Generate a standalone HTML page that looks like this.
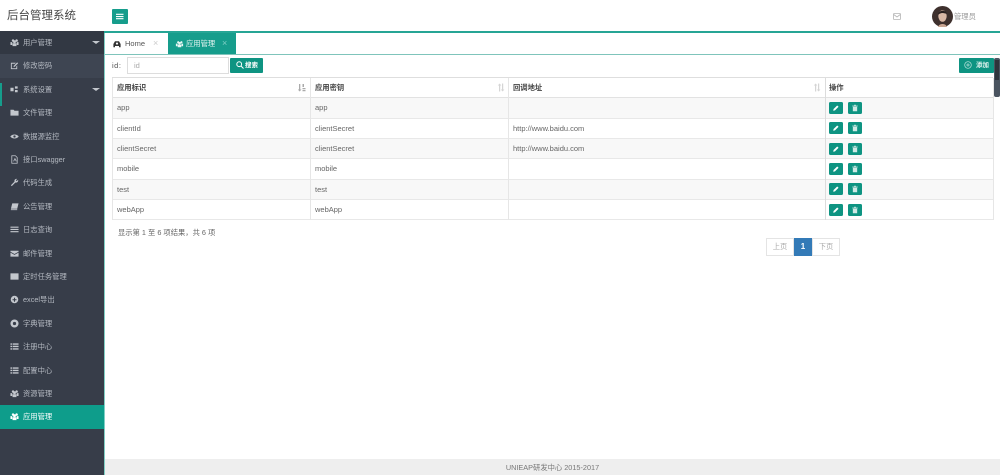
<!DOCTYPE html>
<html lang="zh">
<head>
<meta charset="utf-8">
<title>后台管理系统</title>
<style>
html,body{margin:0;padding:0;width:1000px;height:475px;overflow:hidden;background:#fff;}
body{font-family:"Liberation Sans","Noto Sans CJK SC",sans-serif;color:#555;font-size:7.300px;}
#w{position:relative;width:1000px;height:475px;overflow:hidden;background:#fff;filter:blur(.3px);}
.a{position:absolute;white-space:nowrap;}
#side{position:absolute;left:0;top:31px;width:104px;height:444px;background:#373d49;}
.m{position:absolute;left:0;width:104px;height:23.400px;line-height:23px;color:#b4b9c1;font-size:7.300px;}
.m span{position:absolute;left:23px;top:0;white-space:nowrap;}
.m svg{position:absolute;left:10px;top:7px;width:9px;height:9px;fill:#c3c7cd;}
.caret{position:absolute;left:92px;top:10px;width:0;height:0;border-left:4px solid transparent;border-right:4px solid transparent;border-top:3.500px solid #c3c7cd;}
.row{position:absolute;left:113px;width:880px;height:20px;border-bottom:1px solid #e8e8e8;box-sizing:border-box;font-size:7.500px;line-height:19px;color:#666;}
.row.o{background:#f8f8f8;}
.row i{position:absolute;font-style:normal;top:0;white-space:nowrap;}
.vl{position:absolute;top:78px;height:142px;width:1px;background:#e6e6e6;}
.b{position:absolute;width:14px;height:12px;border-radius:1.500px;background:#0e9482;}
.b svg{position:absolute;left:3px;top:2px;width:8px;height:8px;fill:#fff;}
.b.d svg{fill:#cfe9e5;}
.h{position:absolute;top:78px;font-size:7.300px;font-weight:bold;color:#444;line-height:19px;white-space:nowrap;}
.s{position:absolute;top:83px;width:8px;height:9px;color:#ccc;}
</style>
</head>
<body>
<div id="w">
<svg width="0" height="0" style="position:absolute"><defs>
<symbol id="u" viewBox="0 0 10 10"><path d="M3 1.500a1.400 1.400 0 1 1 0 2.700 1.400 1.400 0 0 1 0-2.700zM7 1.500a1.400 1.400 0 1 1 0 2.700 1.400 1.400 0 0 1 0-2.700zM5 2.500a1.600 1.600 0 1 1 0 3.200 1.600 1.600 0 0 1 0-3.200zM0.500 4.600h2v3.200h-2zM7.500 4.600h2v3.200h-2zM2.800 5.800h4.400v3.200h-4.400z"/></symbol>
<symbol id="l" viewBox="0 0 10 10"><path d="M.5 1.500h1.800v1.500H.5zM3 1.500h6.500v1.500H3zM.5 4.200h1.800v1.500H.5zM3 4.200h6.500v1.500H3zM.5 7h1.800v1.500H.5zM3 7h6.500v1.500H3z"/></symbol>
<symbol id="b" viewBox="0 0 10 10"><path d="M.5 1.800h9v1.300h-9zM.5 4.300h9v1.300h-9zM.5 6.800h9v1.300h-9z"/></symbol>
<symbol id="c" viewBox="0 0 10 10"><path fill-rule="evenodd" d="M5 .5a4.500 4.500 0 1 1 0 9 4.500 4.500 0 0 1 0-9zM5 3.200a1.800 1.800 0 1 0 0 3.600 1.800 1.800 0 0 0 0-3.600z"/></symbol>
<symbol id="p" viewBox="0 0 10 10"><path d="M1.500 8.500l.5-2.200 4.500-4.500 1.700 1.700-4.500 4.500z"/></symbol>
<symbol id="t" viewBox="0 0 10 10"><path d="M1.500 2h7v1h-7zM4 1h2v1H4zM2.300 3.500h5.400v5.500H2.300z"/></symbol>
</defs></svg>

<!-- header -->
<div class="a" style="left:7px;top:8px;font-size:11.500px;line-height:17px;color:#444;">后台管理系统</div>
<div class="a" style="left:112px;top:9px;width:15.500px;height:15px;background:#169d8c;border-radius:1px;">
  <svg style="position:absolute;left:4px;top:4px" width="7.500" height="7" viewBox="0 0 8 7" fill="#fff"><path d="M0 .6h8v1.200H0zM0 2.900h8v1.200H0zM0 5.200h8v1.200H0z"/></svg>
</div>
<svg class="a" style="left:893px;top:13px" width="8" height="7" viewBox="0 0 8 7" fill="none" stroke="#b5b5b5" stroke-width=".8"><rect x=".5" y=".5" width="7" height="6" rx=".6"/><path d="M.7 1.500L4 4l3.300-2.500"/></svg>
<svg class="a" style="left:932px;top:6px" width="21" height="21" viewBox="0 0 21 21">
  <circle cx="10.500" cy="10.500" r="10.500" fill="#3e302d"/>
  <ellipse cx="10.500" cy="10" rx="4.200" ry="5.800" fill="#d9b8a5"/>
  <path d="M6 21c1-4 8-4 9 0z" fill="#c9a592"/>
  <path d="M6 9c0-5 8-6 9-1-3-1-6-2-9 1z" fill="#2a2120"/>
</svg>
<div class="a" style="left:954px;top:11px;font-size:7.300px;line-height:11px;color:#999;">管理员</div>
<div class="a" style="left:0;top:31px;width:1000px;height:2px;background:#26a595;"></div>

<!-- sidebar -->
<div id="side">
  <div style="position:absolute;left:0;top:0;width:104px;height:23px;background:#323843;"></div>
  <div style="position:absolute;left:0;top:23px;width:104px;height:24px;background:#3e4552;"></div>
  <div style="position:absolute;left:0;top:52px;width:2px;height:23px;background:#169d8c;"></div>
  <div class="m" style="top:0"><svg><use href="#u"/></svg><span>用户管理</span><div class="caret"></div></div>
  <div class="m" style="top:23.400px"><svg viewBox="0 0 10 10"><path d="M1 2h5.500l-1 1H2v5h5V6l1-1v4H1zM4 5.500l4-4 1 1-4 4H4z"/></svg><span>修改密码</span></div>
  <div class="m" style="top:46.800px"><svg viewBox="0 0 10 10"><path d="M.5 3h3.500v4H.5zM5.500 1.500h3v2.500h-3zM5.500 5.500h3V8h-3z"/></svg><span>系统设置</span><div class="caret"></div></div>
  <div class="m" style="top:70.200px"><svg viewBox="0 0 10 10"><path d="M.5 2h3.500l1 1h4.500v5.500H.5z"/></svg><span>文件管理</span></div>
  <div class="m" style="top:93.600px"><svg viewBox="0 0 10 10"><path fill-rule="evenodd" d="M.3 5C2.500 2 7.500 2 9.700 5 7.500 8 2.500 8 .3 5zM5 3.700a1.300 1.300 0 1 0 0 2.600 1.300 1.300 0 0 0 0-2.600z"/></svg><span>数据源监控</span></div>
  <div class="m" style="top:117px"><svg viewBox="0 0 10 10" style="fill:none;stroke:#c3c7cd;stroke-width:.9"><path d="M2 .8h4l2 2v6.400H2zM4 7l1.500-3L7 7"/></svg><span>接口swagger</span></div>
  <div class="m" style="top:140.400px"><svg viewBox="0 0 10 10"><path d="M1 8l4-4c-.5-2 1-3.500 3-3L6.500 2.500l1 1L9 2c.5 2-1 3.500-3 3L2 9z"/></svg><span>代码生成</span></div>
  <div class="m" style="top:163.800px"><svg viewBox="0 0 10 10"><path d="M2.500 1.500h7l-1.500 6H1zM1 8h7v1H1z"/></svg><span>公告管理</span></div>
  <div class="m" style="top:187.200px"><svg><use href="#b"/></svg><span>日志查询</span></div>
  <div class="m" style="top:210.600px"><svg viewBox="0 0 10 10"><path d="M.5 2h9v1L5 5.500.5 3zM.5 4l4.500 2.500L9.500 4v4.500h-9z"/></svg><span>邮件管理</span></div>
  <div class="m" style="top:234px"><svg viewBox="0 0 10 10"><path d="M.5 1.500h9v7h-9z"/></svg><span>定时任务管理</span></div>
  <div class="m" style="top:257.400px"><svg viewBox="0 0 10 10"><path fill-rule="evenodd" d="M5 .8a4.200 4.200 0 1 1 0 8.400A4.200 4.200 0 0 1 5 .8zM4.400 3v1.700H2.800v1.200h1.600v1.600h1.200V5.900h1.600V4.700H5.600V3z"/></svg><span>excel导出</span></div>
  <div class="m" style="top:280.800px"><svg><use href="#c"/></svg><span>字典管理</span></div>
  <div class="m" style="top:304.200px"><svg><use href="#l"/></svg><span>注册中心</span></div>
  <div class="m" style="top:327.600px"><svg><use href="#l"/></svg><span>配置中心</span></div>
  <div class="m" style="top:351px"><svg><use href="#u"/></svg><span>资源管理</span></div>
  <div class="m" style="top:374.400px;background:#0e9d8b;color:#fff;height:23.600px;"><svg style="fill:#fff"><use href="#u"/></svg><span>应用管理</span></div>
</div>

<!-- tabs -->
<div class="a" style="left:104px;top:33px;width:1px;height:442px;background:#7fcfc5;"></div>
<svg class="a" style="left:113px;top:40px;width:8px;height:8px" viewBox="0 0 10 10" fill="#333"><path d="M2.500 1.500h5L9.500 5v4h-2V7.500h-5V9h-2V5z"/><circle cx="5" cy="4.500" r="1.300" fill="#fff"/></svg>
<div class="a" style="left:125px;top:38px;font-size:7.500px;line-height:11px;color:#555;">Home</div>
<div class="a" style="left:153px;top:38px;font-size:9px;line-height:11px;color:#ccc;">×</div>
<div class="a" style="left:168px;top:33px;width:68px;height:21px;background:#169d8c;"></div>
<svg class="a" style="left:175px;top:40px;width:9px;height:8px" fill="#eaf6f4"><use href="#u"/></svg>
<div class="a" style="left:186px;top:38px;font-size:7.300px;line-height:11px;color:#e6f5f2;">应用管理</div>
<div class="a" style="left:222px;top:38px;font-size:9px;line-height:11px;color:#7fcfc5;">×</div>
<div class="a" style="left:105px;top:54px;width:895px;height:1px;background:#7fc4bb;"></div>

<!-- search -->
<div class="a" style="left:112px;top:60px;font-size:7.500px;line-height:11px;color:#555;letter-spacing:.5px;">id:</div>
<div class="a" style="left:127px;top:57px;width:100px;height:15px;border:1px solid #ddd;"></div>
<div class="a" style="left:134px;top:60px;font-size:7.500px;line-height:11px;color:#aaa;">id</div>
<div class="a" style="left:230px;top:58px;width:33px;height:15px;background:#0e9482;border-radius:1px;"></div>
<svg class="a" style="left:236px;top:61px" width="8" height="8" viewBox="0 0 8 8" fill="none" stroke="#fff" stroke-width="1"><circle cx="3.200" cy="3.200" r="2.400"/><path d="M5 5l2.500 2.500"/></svg>
<div class="a" style="left:245px;top:60px;font-size:6.500px;line-height:11px;color:#fff;font-weight:bold;">搜索</div>
<div class="a" style="left:959px;top:58px;width:34.500px;height:15px;background:#0e9482;border-radius:1px;"></div>
<svg class="a" style="left:964px;top:61px" width="8" height="8" viewBox="0 0 8 8" fill="none" stroke="#bfe3de" stroke-width=".7"><circle cx="4" cy="4" r="3.300"/><path d="M4 2.200v3.600M2.200 4h3.600"/></svg>
<div class="a" style="left:976px;top:60px;font-size:6.500px;line-height:11px;color:#e6f5f2;font-weight:bold;">添加</div>

<!-- scrollbar -->
<div class="a" style="left:994px;top:58px;width:6px;height:39px;background:#4a5460;border-radius:2px;"></div>
<div class="a" style="left:995px;top:60px;width:4px;height:20px;background:#2e343c;"></div>

<!-- table -->
<div class="a" style="left:112px;top:77px;width:881px;height:1px;background:#dedede;"></div>
<div class="a" style="left:112px;top:97px;width:881px;height:1.500px;background:#e2e2e2;"></div>
<div class="h" style="left:117px">应用标识</div>
<div class="h" style="left:315px">应用密钥</div>
<div class="h" style="left:513px">回调地址</div>
<div class="h" style="left:829px">操作</div>
<svg class="s" style="left:298px" viewBox="0 0 8 9" fill="#aaa"><path d="M1 1h1.300v5.500H3.500L1.650 8.500-.2 6.500H1zM4.500 1h1.500v3H4.500zM4.500 5h3v1.200h-3zM4.500 7h3v1.200h-3z"/></svg>
<svg class="s" style="left:497px" viewBox="0 0 8 9" fill="#d5d5d5"><path d="M2 8.500V2.500H.8L2.600.5l1.800 2H3.200v6zM5 .5h1.200v6h1.200L5.600 8.500 3.800 6.500H5z"/></svg>
<svg class="s" style="left:813px" viewBox="0 0 8 9" fill="#d5d5d5"><path d="M2 8.500V2.500H.8L2.600.5l1.800 2H3.200v6zM5 .5h1.200v6h1.200L5.600 8.500 3.800 6.500H5z"/></svg>

<div class="row o" style="top:98px;height:21px;"><i style="left:4px">app</i><i style="left:202px">app</i></div>
<div class="row" style="top:119px;"><i style="left:4px">clientId</i><i style="left:202px">clientSecret</i><i style="left:400px">http://www.baidu.com</i></div>
<div class="row o" style="top:139px;"><i style="left:4px">clientSecret</i><i style="left:202px">clientSecret</i><i style="left:400px">http://www.baidu.com</i></div>
<div class="row" style="top:159px;height:21px;"><i style="left:4px">mobile</i><i style="left:202px">mobile</i></div>
<div class="row o" style="top:180px;"><i style="left:4px">test</i><i style="left:202px">test</i></div>
<div class="row" style="top:200px;"><i style="left:4px">webApp</i><i style="left:202px">webApp</i></div>

<div class="vl" style="left:112px"></div>
<div class="vl" style="left:310px"></div>
<div class="vl" style="left:508px"></div>
<div class="vl" style="left:825px;background:#dcdcdc"></div>
<div class="vl" style="left:993px"></div>

<div class="b" style="left:829px;top:102px"><svg><use href="#p"/></svg></div><div class="b d" style="left:848px;top:102px"><svg><use href="#t"/></svg></div>
<div class="b" style="left:829px;top:122px"><svg><use href="#p"/></svg></div><div class="b d" style="left:848px;top:122px"><svg><use href="#t"/></svg></div>
<div class="b" style="left:829px;top:143px"><svg><use href="#p"/></svg></div><div class="b d" style="left:848px;top:143px"><svg><use href="#t"/></svg></div>
<div class="b" style="left:829px;top:163px"><svg><use href="#p"/></svg></div><div class="b d" style="left:848px;top:163px"><svg><use href="#t"/></svg></div>
<div class="b" style="left:829px;top:183px"><svg><use href="#p"/></svg></div><div class="b d" style="left:848px;top:183px"><svg><use href="#t"/></svg></div>
<div class="b" style="left:829px;top:204px"><svg><use href="#p"/></svg></div><div class="b d" style="left:848px;top:204px"><svg><use href="#t"/></svg></div>

<!-- info + pagination -->
<div class="a" style="left:118px;top:227px;font-size:7.300px;line-height:11px;color:#666;">显示第 1 至 6 项结果，共 6 项</div>
<div class="a" style="left:766px;top:238px;width:28px;height:18px;border:1px solid #e4e4e4;box-sizing:border-box;text-align:center;font-size:7.300px;line-height:16px;color:#aaa;">上页</div>
<div class="a" style="left:794px;top:238px;width:18px;height:18px;background:#337ab7;text-align:center;font-size:8px;line-height:18px;color:#fff;font-weight:bold;">1</div>
<div class="a" style="left:812px;top:238px;width:28px;height:18px;border:1px solid #e4e4e4;box-sizing:border-box;text-align:center;font-size:7.300px;line-height:16px;color:#aaa;">下页</div>

<!-- footer -->
<div class="a" style="left:105px;top:459px;width:895px;height:16px;background:#eee;text-align:center;font-size:7.300px;line-height:17px;color:#777;">UNIEAP研发中心 2015-2017</div>
</div>
</body>
</html>
